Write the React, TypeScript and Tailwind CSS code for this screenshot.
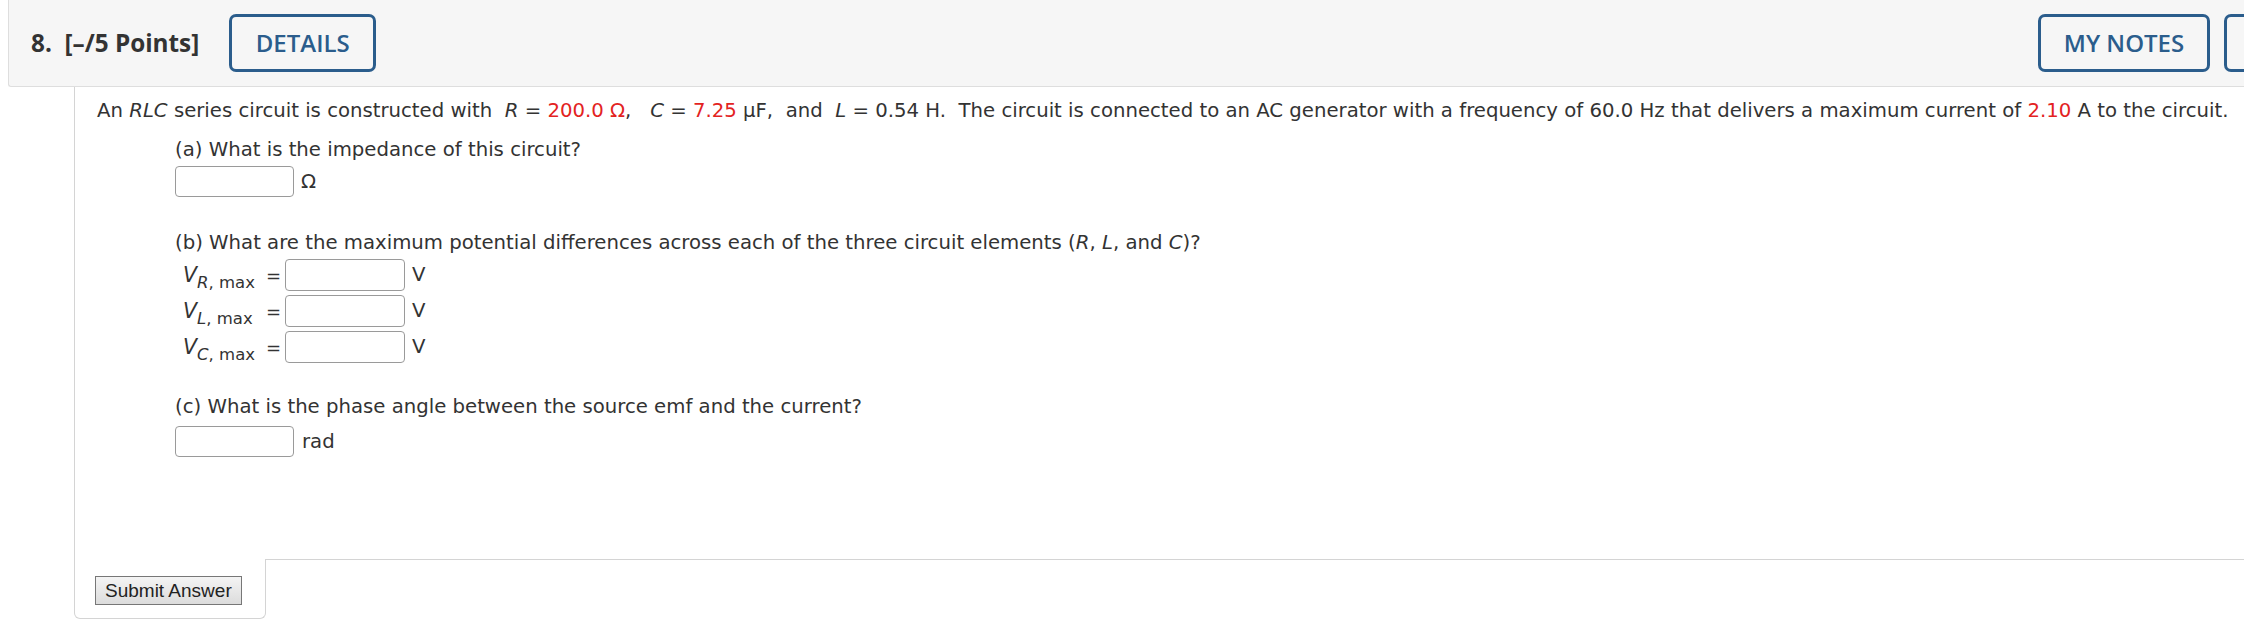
import { type ReactNode } from "react";

export default function App() {
    return (
        <div className="w-full h-[626px] bg-white overflow-hidden font-['DejaVu_Sans',sans-serif] text-[19.7px] text-[#333]">
            <QuestionHeader />

            <div className="ml-[74px] h-[472px] border-l border-[#d4d4d4] pl-[22px] pt-[10px]">
                <p className="leading-[28px] whitespace-nowrap">
                    An <i>RLC</i> series circuit is constructed with&nbsp; <i>R</i> = <Red>200.0 Ω</Red>,&nbsp;&nbsp; <i>C</i> = <Red>7.25</Red> μF,&nbsp; and&nbsp; <i>L</i> = 0.54 H.&nbsp; The circuit is connected to an AC generator with a frequency of 60.0 Hz that delivers a maximum current of <Red>2.10</Red> A to the circuit.
                </p>

                <div className="ml-[78px] mt-[11px]">
                    <div className="leading-[28px]">(a) What is the impedance of this circuit?</div>
                    <div className="mt-[2px] flex items-center">
                        <AnswerBox />
                        <span className="ml-[7px]">Ω</span>
                    </div>
                </div>

                <div className="ml-[78px] mt-[32px]">
                    <div className="leading-[28px]">(b) What are the maximum potential differences across each of the three circuit elements (<i>R</i>, <i>L</i>, and <i>C</i>)?</div>
                    <div className="mt-[2px] flex flex-col gap-[4px]">
                        <VoltRow sub="R" />
                        <VoltRow sub="L" />
                        <VoltRow sub="C" />
                    </div>
                </div>

                <div className="ml-[78px] mt-[30px]">
                    <div className="leading-[28px]">(c) What is the phase angle between the source emf and the current?</div>
                    <div className="mt-[5px] flex items-center">
                        <AnswerBox />
                        <span className="ml-[8px]">rad</span>
                    </div>
                </div>
            </div>

            <div className="ml-[74px] flex h-[60px]">
                <div className="w-[192px] border-l border-b border-r border-[#d4d4d4] rounded-b-[6px] pl-[20px] pt-[17px]">
                    <button
                        type="button"
                        className="h-[29px] px-[9px] border border-[#777] bg-gradient-to-b from-[#f4f4f4] to-[#dcdcdc] font-['Liberation_Sans',sans-serif] text-[19px] leading-none text-[#222]"
                    >
                        Submit Answer
                    </button>
                </div>
                <div className="flex-1 border-t border-[#d4d4d4]" />
            </div>
        </div>
    );
}

function QuestionHeader() {
    return (
        <div className="ml-[8px] h-[87px] bg-[#f6f6f6] border-l border-b border-[#dedede] rounded-bl-[3px] flex items-center pl-[22px] font-['Open_Sans',sans-serif] whitespace-nowrap">
            <span className="text-[24.3px] font-bold text-[#333]">8.&nbsp; [–/5 Points]</span>
            <HeaderButton className="ml-[30px] w-[147px]">DETAILS</HeaderButton>
            <div className="flex-1" />
            <HeaderButton className="w-[172px]">MY NOTES</HeaderButton>
            {/* next button runs past the window edge; only its left border shows */}
            <div className="ml-[14px] w-[280px] shrink-0 -mr-[260px] h-[58px] border-[3px] border-[#2b5d8c] rounded-[7px]" />
        </div>
    );
}

function HeaderButton({ className, children }: { className?: string; children: ReactNode }) {
    return (
        <div className={`h-[58px] border-[3px] border-[#2b5d8c] rounded-[7px] flex items-center justify-center text-[24px] font-semibold text-[#2b5d8c] ${className ?? ""}`}>
            {children}
        </div>
    );
}

function Red({ children }: { children: ReactNode }) {
    return <span className="text-[#e3231f]">{children}</span>;
}

function AnswerBox() {
    return <div className="w-[119px] h-[31px] border border-[#9a9a9a] rounded-[4px] bg-white" />;
}

function VoltRow({ sub }: { sub: string }) {
    return (
        <div className="flex items-center h-[32px]">
            <div className="w-[87px] pl-[8px] whitespace-nowrap">
                <i className="text-[20.5px]">V</i>
                <span className="relative top-[6px] text-[16.5px]"><i>{sub}</i>, max</span>
            </div>
            <span className="w-[23px] text-center text-[18px]">=</span>
            <div className="w-[120px] h-[32px] border border-[#9a9a9a] rounded-[4px] bg-white" />
            <span className="ml-[7px]">V</span>
        </div>
    );
}
